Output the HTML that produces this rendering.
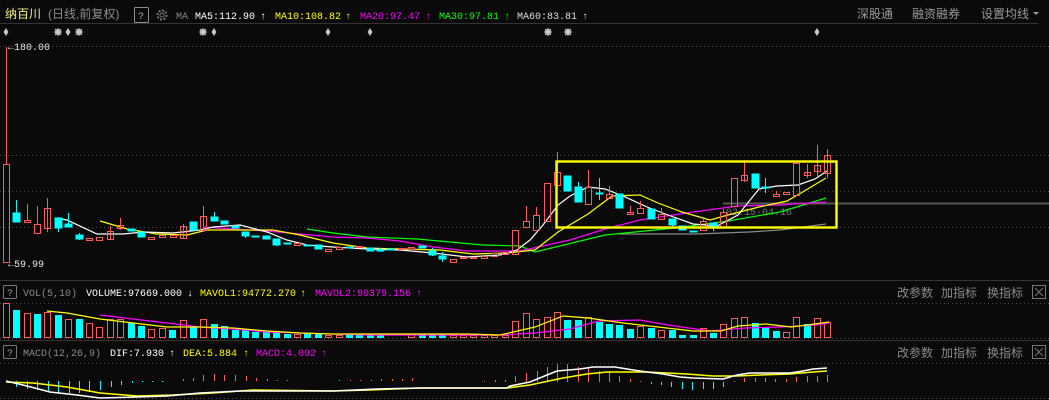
<!DOCTYPE html>
<html><head><meta charset="utf-8"><style>
html,body{margin:0;padding:0;background:#0a0a0a;width:1049px;height:400px;overflow:hidden}
svg{display:block}
.m{font-family:"Liberation Mono",monospace;font-size:10px}
.c{font-family:"Liberation Sans","Noto Sans CJK SC",sans-serif;font-size:12px}
</style></head><body>
<svg width="1049" height="400" viewBox="0 0 1049 400" xmlns="http://www.w3.org/2000/svg">
<rect width="1049" height="400" fill="#0a0a0a"/>
<text x="5" y="18" class="c" font-size="13" fill="#f3ee8a">纳百川</text>
<text x="48" y="18" class="c" fill="#8c8c8c">(日线,前复权)</text>
<rect x="134.5" y="7.5" width="14" height="15" fill="none" stroke="#8c8c8c" rx="1"/>
<text x="138" y="19" class="m" fill="#aaa">?</text>
<circle cx="162" cy="15" r="4.5" fill="none" stroke="#777" stroke-width="2" stroke-dasharray="2 1.5"/>
<circle cx="162" cy="15" r="2" fill="none" stroke="#777"/>
<text x="176" y="19" class="m" fill="#888">MA</text>
<text x="195" y="19" class="m" fill="#fff">MA5:112.90</text>
<text x="260" y="19" class="m" fill="#fff">↑</text>
<text x="275" y="19" class="m" fill="#ffff00">MA10:108.82</text>
<text x="345" y="19" class="m" fill="#ffff00">↑</text>
<text x="360" y="19" class="m" fill="#ff00ff">MA20:97.47</text>
<text x="425" y="19" class="m" fill="#ff00ff">↑</text>
<text x="439" y="19" class="m" fill="#00ff00">MA30:97.81</text>
<text x="504" y="19" class="m" fill="#00ff00">↑</text>
<text x="517" y="19" class="m" fill="#ddd">MA60:83.81</text>
<text x="582" y="19" class="m" fill="#ddd">↑</text>
<text x="857" y="18" class="c" fill="#9a9a9a">深股通</text>
<text x="912" y="18" class="c" fill="#9a9a9a">融资融券</text>
<text x="981" y="18" class="c" fill="#9a9a9a">设置均线</text>
<path d="M1033 12 L1039 12 L1036 15 Z" fill="#9a9a9a"/>
<line x1="0" y1="23.5" x2="1038" y2="23.5" stroke="#333"/>

<g fill="#c8c8c8">
<path d="M3.5 32 L6 28 L8.5 32 L6 36 Z"/>
<path d="M65.5 32 L68 28 L70.5 32 L68 36 Z"/>
<path d="M211.5 32 L214 28 L216.5 32 L214 36 Z"/>
<path d="M325.5 32 L328 28 L330.5 32 L328 36 Z"/>
<path d="M367.5 32 L370 28 L372.5 32 L370 36 Z"/>
<path d="M814.5 32 L817 28 L819.5 32 L817 36 Z"/>
</g>
<g fill="#c8c8c8" stroke="#c8c8c8" stroke-width="1">
<circle cx="58" cy="32" r="2.5"/><path d="M58 28v8M54 32h8M55 29l6 6M61 29l-6 6"/>
<circle cx="79" cy="32" r="2.5"/><path d="M79 28v8M75 32h8M76 29l6 6M82 29l-6 6"/>
<circle cx="203" cy="32" r="2.5"/><path d="M203 28v8M199 32h8M200 29l6 6M206 29l-6 6"/>
<circle cx="548" cy="32" r="2.5"/><path d="M548 28v8M544 32h8M545 29l6 6M551 29l-6 6"/>
<circle cx="568" cy="32" r="2.5"/><path d="M568 28v8M564 32h8M565 29l6 6M571 29l-6 6"/>
</g>

<g stroke="#4a4a4a" stroke-dasharray="1 3">
<line x1="0" y1="46.5" x2="1049" y2="46.5"/>
<line x1="0" y1="155.5" x2="1049" y2="155.5"/>
<line x1="0" y1="191.5" x2="1049" y2="191.5"/>
<line x1="0" y1="227.5" x2="1049" y2="227.5"/>
</g>
<line x1="0" y1="280.5" x2="1049" y2="280.5" stroke="#333"/>
<line x1="723" y1="203.5" x2="1049" y2="203.5" stroke="#555" stroke-width="2"/>
<text x="726" y="215" class="m" font-size="11" fill="#777">02.15-04.16</text>

<g fill="none" stroke-width="1.2">
<polyline stroke="#888" points="619,234 696,234 749,232 780,230 826,224"/>
<polyline stroke="#00ff00" points="307,229 333,233 367,237 417,239 450,242 483,245 520,246 535,252 605,235 675,228 728,221 780,212 826,198"/>
<polyline stroke="#ff00ff" points="203,227 233,229 267,231 300,234 333,237 367,238 400,241 433,247 467,251 520,251 570,240 605,229 640,220 693,212 738,206 780,205 826,202"/>
<polyline stroke="#ffff00" points="100,221 127,229 157,234 187,235 207,230 233,230 273,230 300,235 333,243 367,248 400,249 440,250 473,254 507,253 535,250 558,232 588,214 612,196 640,195 658,203 682,212 710,220 728,215 759,207 787,201 801,193 826,178"/>
<polyline stroke="#fff" points="55,218 67,220 97,234 123,234 143,232 173,233 200,230 213,227 240,225 267,232 287,240 307,245 333,247 367,249 400,250 433,253 467,257 500,255 517,250 530,240 543,225 558,205 570,196 588,187 605,189 623,196 647,207 668,215 693,224 717,226 738,215 759,189 777,186 798,185 815,179 827,171"/>
</g>

<g stroke="#ff5a5a" fill="none" shape-rendering="crispEdges">
<line x1="6.5" y1="47" x2="6.5" y2="164"/><rect x="3.5" y="164.5" width="6" height="98"/>
<line x1="27.5" y1="204" x2="27.5" y2="220"/><rect x="24.5" y="220.5" width="6" height="2"/>
<line x1="37.5" y1="206" x2="37.5" y2="224"/><rect x="34.5" y="224.5" width="6" height="9"/>
<line x1="47.5" y1="198" x2="47.5" y2="232"/><rect x="44.5" y="208.5" width="6" height="20"/>
<rect x="86.5" y="238.5" width="6" height="2"/>
<rect x="96.5" y="237.5" width="6" height="3"/>
<line x1="110.5" y1="226" x2="110.5" y2="240"/><rect x="107.5" y="231.5" width="6" height="8"/>
<line x1="120.5" y1="218" x2="120.5" y2="230"/><rect x="117.5" y="225.5" width="6" height="3"/>
<rect x="148.5" y="237.5" width="6" height="2"/>
<rect x="159.5" y="235.5" width="6" height="2"/>
<rect x="170.5" y="235.5" width="6" height="2"/>
<line x1="183.5" y1="224" x2="183.5" y2="238"/><rect x="180.5" y="226.5" width="6" height="12"/>
<line x1="203.5" y1="206" x2="203.5" y2="230"/><rect x="200.5" y="216.5" width="6" height="14"/>
<rect x="294.5" y="243.5" width="6" height="2"/>
<rect x="325.5" y="249.5" width="6" height="2"/>
<rect x="336.5" y="247.5" width="6" height="2"/>
<rect x="356.5" y="246.5" width="6" height="1"/>
<rect x="398.5" y="248.5" width="6" height="1"/>
<rect x="408.5" y="247.5" width="6" height="2"/>
<rect x="450.5" y="259.5" width="6" height="3"/>
<rect x="460.5" y="257.5" width="6" height="1"/>
<rect x="470.5" y="257.5" width="6" height="1"/>
<rect x="481.5" y="256.5" width="6" height="2"/>
<rect x="491.5" y="253.5" width="6" height="3"/>
<rect x="502.5" y="252.5" width="6" height="2"/>
<rect x="512.5" y="230.5" width="6" height="24"/>
<line x1="526.5" y1="206" x2="526.5" y2="221"/><rect x="523.5" y="221.5" width="6" height="6"/>
<line x1="536.5" y1="207" x2="536.5" y2="215"/><rect x="533.5" y="215.5" width="6" height="15"/>
<rect x="544.5" y="183.5" width="6" height="38"/>
<line x1="557.5" y1="152" x2="557.5" y2="172"/><rect x="554.5" y="172.5" width="6" height="13"/>
<line x1="588.5" y1="170" x2="588.5" y2="187"/><rect x="585.5" y="187.5" width="6" height="17"/>
<line x1="609.5" y1="186" x2="609.5" y2="194"/><rect x="606.5" y="194.5" width="6" height="4"/>
<line x1="630.5" y1="206" x2="630.5" y2="215"/><rect x="627.5" y="212.5" width="6" height="2"/>
<line x1="640.5" y1="201" x2="640.5" y2="208"/><rect x="637.5" y="208.5" width="6" height="5"/>
<line x1="661.5" y1="208" x2="661.5" y2="214"/><rect x="658.5" y="214.5" width="6" height="5"/>
<line x1="703.5" y1="219" x2="703.5" y2="221"/><rect x="700.5" y="221.5" width="6" height="9"/>
<line x1="723.5" y1="209" x2="723.5" y2="212"/><rect x="720.5" y="212.5" width="6" height="15"/>
<rect x="731.5" y="178.5" width="6" height="28"/>
<line x1="744.5" y1="160" x2="744.5" y2="182"/><rect x="741.5" y="175.5" width="6" height="5"/>
<line x1="776.5" y1="191" x2="776.5" y2="194"/><rect x="773.5" y="194.5" width="6" height="2"/>
<rect x="783.5" y="192.5" width="6" height="2"/>
<rect x="793.5" y="163.5" width="6" height="32"/>
<line x1="807.5" y1="164" x2="807.5" y2="178"/><rect x="804.5" y="172.5" width="6" height="3"/>
<line x1="817.5" y1="145" x2="817.5" y2="176"/><rect x="814.5" y="165.5" width="6" height="6"/>
<line x1="827.5" y1="149" x2="827.5" y2="178"/><rect x="824.5" y="155.5" width="6" height="18"/>
</g>
<g fill="#00ffff" stroke="#00ffff" shape-rendering="crispEdges">
<line x1="16.5" y1="200" x2="16.5" y2="222"/><rect x="13" y="213" width="7" height="9"/>
<line x1="58.5" y1="217" x2="58.5" y2="232"/><rect x="55" y="218" width="7" height="10"/>
<line x1="68.5" y1="213" x2="68.5" y2="227"/><rect x="65" y="224" width="7" height="3"/>
<line x1="79.5" y1="233" x2="79.5" y2="240"/><rect x="76" y="235" width="7" height="4"/>
<rect x="128" y="229" width="7" height="2"/>
<rect x="138" y="232" width="7" height="5"/>
<rect x="190" y="222" width="7" height="8"/>
<line x1="214.5" y1="212" x2="214.5" y2="221"/><rect x="211" y="217" width="7" height="4"/>
<rect x="221" y="221" width="7" height="3"/>
<rect x="232" y="226" width="7" height="2"/>
<line x1="245.5" y1="232" x2="245.5" y2="238"/><rect x="242" y="232" width="7" height="4"/>
<rect x="252" y="236" width="7" height="1"/>
<rect x="263" y="236" width="7" height="3"/>
<line x1="276.5" y1="239" x2="276.5" y2="246"/><rect x="273" y="239" width="7" height="6"/>
<rect x="284" y="243" width="7" height="1"/>
<rect x="304" y="245" width="7" height="1"/>
<rect x="315" y="245" width="7" height="4"/>
<rect x="346" y="247" width="7" height="1"/>
<rect x="367" y="248" width="7" height="3"/>
<line x1="380.5" y1="248" x2="380.5" y2="252"/><rect x="377" y="250" width="7" height="1"/>
<rect x="387" y="249" width="7" height="1"/>
<rect x="419" y="246" width="7" height="2"/>
<line x1="432.5" y1="248" x2="432.5" y2="256"/><rect x="429" y="251" width="7" height="4"/>
<line x1="442.5" y1="252" x2="442.5" y2="262"/><rect x="439" y="256" width="7" height="3"/>
<rect x="564" y="176" width="7" height="15"/>
<line x1="578.5" y1="182" x2="578.5" y2="202"/><rect x="575" y="187" width="7" height="15"/>
<line x1="599.5" y1="178" x2="599.5" y2="200"/><rect x="596" y="193" width="7" height="1"/>
<rect x="616" y="194" width="7" height="14"/>
<rect x="648" y="209" width="7" height="10"/>
<line x1="672.5" y1="219" x2="672.5" y2="227"/><rect x="669" y="219" width="7" height="6"/>
<rect x="679" y="226" width="7" height="4"/>
<rect x="690" y="231" width="7" height="1"/>
<line x1="713.5" y1="223" x2="713.5" y2="231"/><rect x="710" y="223" width="7" height="5"/>
<rect x="752" y="174" width="7" height="14"/>
<line x1="765.5" y1="178" x2="765.5" y2="193"/><rect x="762" y="187" width="7" height="1"/>
</g>
<rect x="556.5" y="161.5" width="280" height="66" fill="none" stroke="#ffff00" stroke-width="2.4"/>

<text x="8" y="50" class="m" font-size="11" fill="#e6e6e6">←180.00</text>
<text x="8" y="267" class="m" font-size="11" fill="#e6e6e6">←59.99</text>

<rect x="3.5" y="285.5" width="13" height="13" fill="none" stroke="#777" rx="1"/>
<text x="7" y="296" class="m" fill="#999">?</text>
<text x="23" y="296" class="m" fill="#8a8a8a">VOL(5,10)</text>
<text x="86" y="296" class="m" fill="#fff">VOLUME:97669.000</text>
<text x="187" y="296" class="m" fill="#fff">↓</text>
<text x="200" y="296" class="m" fill="#ffff00">MAVOL1:94772.270</text>
<text x="300" y="296" class="m" fill="#ffff00">↑</text>
<text x="315" y="296" class="m" fill="#ff00ff">MAVOL2:90379.156</text>
<text x="416" y="296" class="m" fill="#ff00ff">↑</text>
<g class="c" fill="#8a8a8a">
<text x="897" y="297">改参数</text><text x="941" y="297">加指标</text><text x="987" y="297">换指标</text>
<text x="897" y="357">改参数</text><text x="941" y="357">加指标</text><text x="987" y="357">换指标</text>
</g>
<g fill="none" stroke="#777">
<rect x="1032.5" y="285.5" width="13" height="13"/><path d="M1035 288l8 8M1043 288l-8 8"/>
<rect x="1032.5" y="345.5" width="13" height="13"/><path d="M1035 348l8 8M1043 348l-8 8"/>
</g>
<g stroke="#4a4a4a" stroke-dasharray="1 3">
<line x1="0" y1="303.5" x2="1049" y2="303.5"/>
<line x1="0" y1="338.5" x2="1049" y2="338.5"/>
<line x1="0" y1="363.5" x2="1049" y2="363.5"/>
<line x1="0" y1="398.5" x2="1049" y2="398.5"/>
</g>
<line x1="0" y1="340.5" x2="1049" y2="340.5" stroke="#333"/>

<g stroke="#ff5a5a" fill="none" shape-rendering="crispEdges">
<rect x="3.5" y="303.5" width="6" height="34"/>
<rect x="24.5" y="313.5" width="6" height="24"/>
<rect x="44.5" y="312.5" width="6" height="25"/>
<rect x="65.5" y="319.5" width="6" height="18"/>
<rect x="86.5" y="323.5" width="6" height="14"/>
<rect x="96.5" y="327.5" width="6" height="10"/>
<rect x="107.5" y="319.5" width="6" height="18"/>
<rect x="117.5" y="319.5" width="6" height="18"/>
<rect x="148.5" y="329.5" width="6" height="8"/>
<rect x="159.5" y="328.5" width="6" height="9"/>
<rect x="180.5" y="320.5" width="6" height="17"/>
<rect x="200.5" y="319.5" width="6" height="18"/>
<rect x="294.5" y="334.5" width="6" height="3"/>
<rect x="325.5" y="335.5" width="6" height="2"/>
<rect x="336.5" y="335.5" width="6" height="2"/>
<rect x="408.5" y="334.5" width="6" height="3"/>
<rect x="450.5" y="335.5" width="6" height="2"/>
<rect x="460.5" y="335.5" width="6" height="2"/>
<rect x="470.5" y="335.5" width="6" height="2"/>
<rect x="481.5" y="335.5" width="6" height="2"/>
<rect x="491.5" y="335.5" width="6" height="2"/>
<rect x="502.5" y="335.5" width="6" height="2"/>
<rect x="512.5" y="321.5" width="6" height="16"/>
<rect x="523.5" y="313.5" width="6" height="24"/>
<rect x="533.5" y="319.5" width="6" height="18"/>
<rect x="544.5" y="317.5" width="6" height="20"/>
<rect x="554.5" y="312.5" width="6" height="25"/>
<rect x="585.5" y="317.5" width="6" height="20"/>
<rect x="637.5" y="326.5" width="6" height="11"/>
<rect x="658.5" y="330.5" width="6" height="7"/>
<rect x="700.5" y="328.5" width="6" height="9"/>
<rect x="720.5" y="324.5" width="6" height="13"/>
<rect x="731.5" y="318.5" width="6" height="19"/>
<rect x="741.5" y="317.5" width="6" height="20"/>
<rect x="783.5" y="332.5" width="6" height="5"/>
<rect x="793.5" y="317.5" width="6" height="20"/>
<rect x="814.5" y="318.5" width="6" height="19"/>
<rect x="824.5" y="322.5" width="6" height="15"/>
</g>
<g fill="#00ffff" shape-rendering="crispEdges">
<rect x="13" y="310" width="7" height="28"/>
<rect x="34" y="314" width="7" height="24"/>
<rect x="55" y="315" width="7" height="23"/>
<rect x="76" y="319" width="7" height="19"/>
<rect x="128" y="323" width="7" height="15"/>
<rect x="138" y="326" width="7" height="12"/>
<rect x="169" y="330" width="7" height="8"/>
<rect x="190" y="327" width="7" height="11"/>
<rect x="211" y="324" width="7" height="14"/>
<rect x="221" y="326" width="7" height="12"/>
<rect x="232" y="330" width="7" height="8"/>
<rect x="242" y="329" width="7" height="9"/>
<rect x="252" y="332" width="7" height="6"/>
<rect x="263" y="332" width="7" height="6"/>
<rect x="273" y="331" width="7" height="7"/>
<rect x="284" y="334" width="7" height="4"/>
<rect x="304" y="333" width="7" height="5"/>
<rect x="315" y="333" width="7" height="5"/>
<rect x="346" y="334" width="7" height="4"/>
<rect x="356" y="335" width="7" height="3"/>
<rect x="367" y="334" width="7" height="4"/>
<rect x="377" y="335" width="7" height="3"/>
<rect x="419" y="334" width="7" height="4"/>
<rect x="429" y="334" width="7" height="4"/>
<rect x="439" y="335" width="7" height="3"/>
<rect x="564" y="320" width="7" height="18"/>
<rect x="575" y="320" width="7" height="18"/>
<rect x="596" y="322" width="7" height="16"/>
<rect x="606" y="324" width="7" height="14"/>
<rect x="616" y="325" width="7" height="13"/>
<rect x="627" y="329" width="7" height="9"/>
<rect x="648" y="328" width="7" height="10"/>
<rect x="669" y="330" width="7" height="8"/>
<rect x="679" y="335" width="7" height="3"/>
<rect x="690" y="335" width="7" height="3"/>
<rect x="710" y="333" width="7" height="5"/>
<rect x="752" y="323" width="7" height="15"/>
<rect x="762" y="328" width="7" height="10"/>
<rect x="773" y="331" width="7" height="7"/>
<rect x="804" y="324" width="7" height="14"/>
</g>
<g fill="none" stroke-width="1.2">
<polyline stroke="#ff00ff" points="100,315 133,319 167,323 200,327 233,329 267,332 300,333 367,335 500,335 535,333 570,329 598,321 640,320 668,325 710,331 745,328 780,327 815,325 829,323"/>
<polyline stroke="#ffff00" points="47,311 67,313 100,319 133,323 167,327 200,327 233,328 267,331 300,333 333,334 400,334 467,334 500,335 535,327 563,316 588,318 623,323 658,327 693,331 721,331 738,326 766,324 791,327 815,324 829,322"/>
</g>

<rect x="3.5" y="345.5" width="13" height="13" fill="none" stroke="#777" rx="1"/>
<text x="7" y="356" class="m" fill="#999">?</text>
<text x="23" y="356" class="m" fill="#8a8a8a">MACD(12,26,9)</text>
<text x="110" y="356" class="m" fill="#fff">DIF:7.930</text>
<text x="169" y="356" class="m" fill="#fff">↑</text>
<text x="183" y="356" class="m" fill="#ffff00">DEA:5.884</text>
<text x="243" y="356" class="m" fill="#ffff00">↑</text>
<text x="256" y="356" class="m" fill="#ff00ff">MACD:4.092</text>
<text x="321" y="356" class="m" fill="#ff00ff">↑</text>

<g stroke="#00ffff" shape-rendering="crispEdges">
<path d="M16.5 381v6M27.5 381v8M37.5 381v9M48.5 381v11M58.5 381v12M69.5 381v12M79.5 381v12M89.5 381v11M100.5 381v9M111.5 381v6M121.5 381v4M132.5 381v2M142.5 381v1M152.5 381v1M162.5 381v1"/>
<path d="M651.5 382v2M661.5 382v3M671.5 382v5M682.5 382v7M692.5 382v8M703.5 382v7M713.5 382v7M723.5 382v5"/>
</g>
<g stroke="#ff5a5a" shape-rendering="crispEdges">
<path d="M183.5 379v2M193.5 378v3M203.5 375v6M214.5 374v7M224.5 375v6M235.5 375v6M246.5 376v5M256.5 378v3M267.5 379v2M277.5 380v1M287.5 380v1M339.5 380v1M350.5 380v1M360.5 380v1M371.5 380v1M381.5 379v2M392.5 379v2M402.5 379v2M412.5 378v3"/>
<path d="M484.5 381v1M495.5 380v2M505.5 380v2M515.5 376v6M526.5 373v9M537.5 371v11M547.5 367v15M557.5 364v18M567.5 364v18M578.5 367v15M588.5 368v14M599.5 371v11M609.5 372v10M619.5 376v6M630.5 379v3M640.5 381v1M734.5 381v1M744.5 378v4M755.5 378v4M765.5 378v4M775.5 379v3M786.5 379v3M796.5 377v5M807.5 376v6M817.5 376v6M827.5 375v7"/>
</g>
<g fill="none" stroke-width="1.5">
<polyline stroke="#ffff00" points="6,382 33,383 67,387 100,393 137,396 173,395 213,393 253,390 333,391 370,390 420,388 480,388 507,388 530,385 563,378 587,374 607,372 647,372 667,373 687,374 713,376 737,376 760,375 790,374 813,372 827,371"/>
<polyline stroke="#ffffff" points="6,381 27,386 50,392 77,395 100,398 137,397 167,396 200,393 240,391 333,391 377,389 420,388 480,388 507,388 510,386 530,382 547,375 557,371 580,369 593,367 615,367 627,369 647,372 663,374 680,377 693,378 723,379 737,375 750,373 790,373 803,371 813,369 827,368"/>
</g>
</svg>
</body></html>
